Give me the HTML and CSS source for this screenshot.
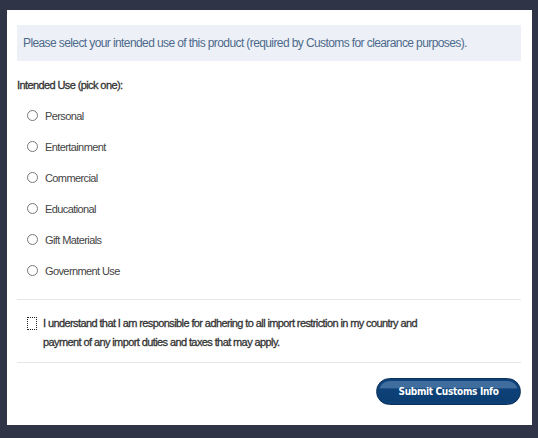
FILE: index.html
```html
<!DOCTYPE html>
<html>
<head>
<meta charset="utf-8">
<link rel="stylesheet" href="styles.css">
</head>
<body>
<div class="panel">
  <div class="info">Please select your intended use of this product (required by Customs for clearance purposes).</div>
  <div class="label">Intended Use (pick one):</div>
  <ul class="options">
    <li class="option"><span class="radio"></span>Personal</li>
    <li class="option"><span class="radio"></span>Entertainment</li>
    <li class="option"><span class="radio"></span>Commercial</li>
    <li class="option"><span class="radio"></span>Educational</li>
    <li class="option"><span class="radio"></span>Gift Materials</li>
    <li class="option"><span class="radio"></span>Government Use</li>
  </ul>
  <div class="agree">
    <span class="check"></span>
    <p class="agree-text">I understand that I am responsible for adhering to all import restriction in my country and payment of any import duties and taxes that may apply.</p>
  </div>
  <div class="actions">
    <button class="submit">Submit Customs Info</button>
  </div>
</div>
</body>
</html>
```
FILE: styles.css
```css
html, body {
  margin: 0;
  padding: 0;
  background: #2f3546;
}
body {
  font-family: "Liberation Sans", Arial, sans-serif;
  color: #333;
}
.panel {
  margin: 10px 6px 13px 7px;
  background: #fff;
  height: 415px;
  box-sizing: border-box;
  padding: 15px 11px 0 10px;
}
.info {
  background: #edf1f7;
  height: 36px;
  padding-left: 6px;
  display: flex;
  align-items: center;
  font-size: 12px;
  letter-spacing: -0.6px;
  color: #4d6a8c;
}
.label {
  margin-top: 17px;
  font-size: 11px;
  letter-spacing: -0.6px;
  -webkit-text-stroke: 0.3px #333;
  color: #333;
  height: 14px;
  line-height: 14px;
}
.options {
  list-style: none;
  margin: 8px 0 0 0;
  padding: 0 0 0 10px;
}
.option {
  height: 31px;
  display: flex;
  align-items: center;
  font-size: 11px;
  letter-spacing: -0.6px;
  color: #444;
}
.radio {
  width: 9px;
  height: 9px;
  border: 1px solid #777;
  border-radius: 50%;
  margin-right: 7px;
  flex: none;
}
.agree {
  margin-top: 13px;
  border-top: 1px solid #e6e6e6;
  border-bottom: 1px solid #e6e6e6;
  display: flex;
  align-items: flex-start;
  padding: 14px 0 10px 10px;
}
.check {
  width: 8px;
  height: 11px;
  border: 1px dotted #222;
  margin-top: 3px;
  margin-right: 6px;
  flex: none;
}
.agree-text {
  margin: 0;
  width: 380px;
  font-size: 11px;
  line-height: 19px;
  letter-spacing: -0.6px;
  -webkit-text-stroke: 0.3px #333;
  color: #333;
}
.actions {
  display: flex;
  justify-content: flex-end;
  padding-top: 15px;
}
.submit {
  width: 145px;
  height: 27px;
  border: 1px solid #0a2f59;
  border-radius: 14px;
  background: linear-gradient(#3f6e9e 0, #3f6e9e 35%, #0d4178 40%, #0b3d70 100%);
  box-shadow: inset 0 0 0 2px #0d4178;
  color: #fff;
  font-family: "DejaVu Sans Condensed", "DejaVu Sans", sans-serif;
  font-stretch: condensed;
  font-weight: bold;
  font-size: 10px;
  letter-spacing: -0.3px;
  padding: 0;
  cursor: pointer;
}
```
